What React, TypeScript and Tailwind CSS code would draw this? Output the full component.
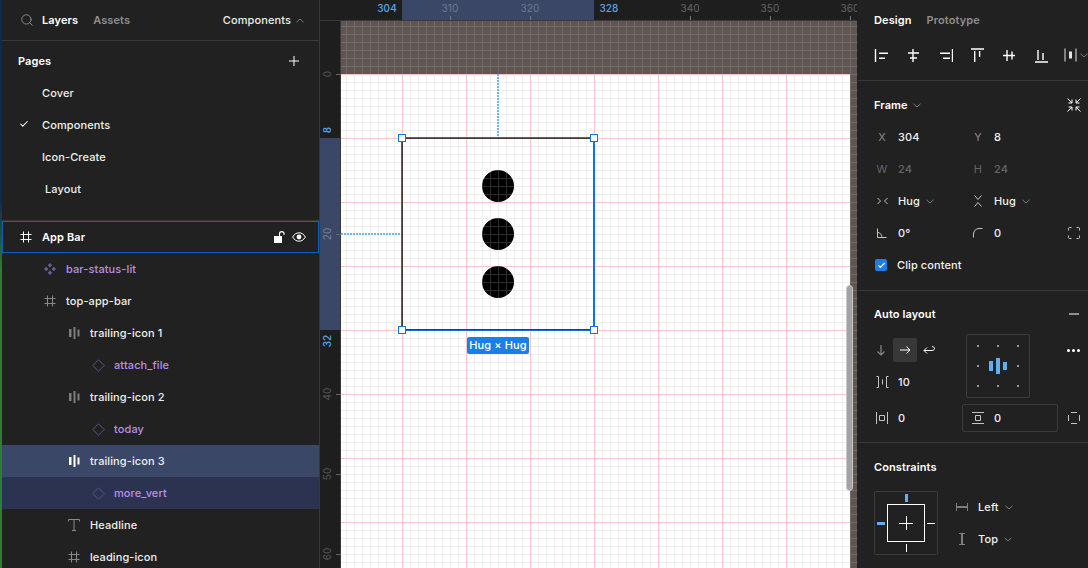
import { ReactNode } from 'react';
import { Search, Plus, Check, Minus } from 'lucide-react';

const FONT = "font-['Inter','Liberation_Sans',sans-serif]";

const Chevron = ({ up = false, className = '' }: { up?: boolean; className?: string }) => (
  <svg width="8" height="5" viewBox="0 0 8 5" fill="none" className={className}>
    <path d={up ? 'M0.5 4.2 L4 1 L7.5 4.2' : 'M0.5 0.8 L4 4 L7.5 0.8'} stroke="#7c7c7c" strokeWidth="1" />
  </svg>
);

const FrameIcon = ({ color = '#8a8a8a' }: { color?: string }) => (
  <svg width="12" height="12" viewBox="0 0 12 12" fill="none" stroke={color} strokeWidth="1">
    <path d="M3.5 0.5V11.5M8.5 0.5V11.5M0.5 3.5H11.5M0.5 8.5H11.5" />
  </svg>
);

const BarsIcon = ({ color = '#7d7d7d' }: { color?: string }) => (
  <svg width="11" height="12" viewBox="0 0 11 12" fill={color}>
    <rect x="0" y="2" width="2.5" height="8" />
    <rect x="4.5" y="0" width="2" height="12" />
    <rect x="8.5" y="2.5" width="2" height="7" />
  </svg>
);

const DiamondIcon = () => (
  <svg width="13" height="13" viewBox="0 0 13 13" fill="none" stroke="#5f4f8c" strokeWidth="1">
    <path d="M6.5 0.8 L12.2 6.5 L6.5 12.2 L0.8 6.5 Z" />
  </svg>
);

const ComponentIcon = () => (
  <svg width="12" height="12" viewBox="0 0 12 12" fill="#6f5a9e">
    <path d="M6 0 L8.2 2.2 L6 4.4 L3.8 2.2 Z" />
    <path d="M2.2 3.8 L4.4 6 L2.2 8.2 L0 6 Z" />
    <path d="M9.8 3.8 L12 6 L9.8 8.2 L7.6 6 Z" />
    <path d="M6 7.6 L8.2 9.8 L6 12 L3.8 9.8 Z" />
  </svg>
);

const TextIcon = () => (
  <svg width="12" height="12" viewBox="0 0 12 12" fill="none" stroke="#8a8a8a" strokeWidth="1">
    <path d="M0.5 2.5V0.5H11.5V2.5M6 0.5V11.5M4 11.5H8" />
  </svg>
);

const LockOpen = () => (
  <svg width="11" height="12" viewBox="0 0 11 12" fill="none">
    <rect x="0" y="5" width="8" height="7" fill="#fff" />
    <path d="M5.5 5V2.8C5.5 1.5 6.5 0.6 7.8 0.6C9.1 0.6 10 1.5 10 2.8V4" stroke="#fff" strokeWidth="1.1" />
  </svg>
);

const EyeIcon = () => (
  <svg width="14" height="10" viewBox="0 0 14 10" fill="none">
    <path d="M0.6 5C2.2 2.2 4.4 0.8 7 0.8C9.6 0.8 11.8 2.2 13.4 5C11.8 7.8 9.6 9.2 7 9.2C4.4 9.2 2.2 7.8 0.6 5Z" stroke="#fff" strokeWidth="1" />
    <circle cx="7" cy="5" r="2.4" fill="#fff" />
  </svg>
);

type Layer = { name: string; depth: number; icon: ReactNode; purple?: boolean; bg?: string };

const LAYERS: Layer[] = [
  { name: 'bar-status-lit', depth: 1, icon: <ComponentIcon />, purple: true },
  { name: 'top-app-bar', depth: 1, icon: <FrameIcon /> },
  { name: 'trailing-icon 1', depth: 2, icon: <BarsIcon /> },
  { name: 'attach_file', depth: 3, icon: <DiamondIcon />, purple: true },
  { name: 'trailing-icon 2', depth: 2, icon: <BarsIcon /> },
  { name: 'today', depth: 3, icon: <DiamondIcon />, purple: true },
  { name: 'trailing-icon 3', depth: 2, icon: <BarsIcon color="#ffffff" />, bg: 'bg-[#3a4766]' },
  { name: 'more_vert', depth: 3, icon: <DiamondIcon />, purple: true, bg: 'bg-[#2c3350]' },
  { name: 'Headline', depth: 2, icon: <TextIcon /> },
  { name: 'leading-icon', depth: 2, icon: <FrameIcon /> },
];

const PAGES = ['Cover', 'Components', 'Icon-Create', ' Layout'];

function LeftPanel() {
  return (
    <div className="flex h-full w-[320px] shrink-0 border-r border-[#383838] bg-[#212121]">
      <div className="w-[2px] shrink-0 bg-[linear-gradient(#13294a_0,#13294a_200px,#2e7d32_270px)]" />
      <div className="min-w-0 flex-1">
        <div className="flex h-[41px] items-center border-b border-[#383838] pl-[18px] pr-[15px]">
          <Search size={14} strokeWidth={1.7} className="mr-[8px] text-[#8a8a8a]" />
          <span className="mr-[15px] text-[11px] font-semibold text-white">Layers</span>
          <span className="text-[11px] font-semibold text-[#8e8e8e]">Assets</span>
          <span className="ml-auto text-[11px] font-[450] text-[#ececec]">Components</span>
          <Chevron up className="ml-[5px]" />
        </div>
        <div className="border-b border-[#383838] pt-[4px] pb-[15px]">
          <div className="flex h-8 items-center justify-between pl-[16px] pr-[17px]">
            <span className="text-[11px] font-semibold text-white">Pages</span>
            <Plus size={16} strokeWidth={1.5} className="text-white" />
          </div>
          {PAGES.map((p) => (
            <div key={p} className="relative flex h-8 items-center pl-[40px] text-[11px] font-[450] text-[#eeeeee]">
              {p === 'Components' && <Check size={10} strokeWidth={2.5} className="absolute left-[17px] top-[10px] text-white" />}
              <span className={p === ' Layout' ? 'pl-[3px]' : ''}>{p.trim()}</span>
            </div>
          ))}
        </div>
        <div className="flex h-8 items-center border border-[#0d5fc0] pl-[17px] pr-[12px]">
          <FrameIcon color="#ffffff" />
          <span className="ml-[10px] text-[11px] font-semibold text-white">App Bar</span>
          <span className="ml-auto flex items-center gap-[7px]">
            <LockOpen />
            <EyeIcon />
          </span>
        </div>
        {LAYERS.map((l) => (
          <div key={l.name} className={`flex h-8 items-center ${l.bg ?? ''}`}>
            <span className={`flex w-[16px] justify-center ${l.depth === 1 ? 'ml-[40px]' : l.depth === 2 ? 'ml-[64px]' : 'ml-[88px]'}`}>
              {l.icon}
            </span>
            <span className={`ml-[8px] text-[11px] font-[450] ${l.purple ? 'text-[#b98ff0]' : 'text-[#eeeeee]'}`}>{l.name}</span>
          </div>
        ))}
      </div>
    </div>
  );
}

const TOP_MARKS = [
  { label: '304', x: 67, blue: true },
  { label: '310', x: 130 },
  { label: '320', x: 210 },
  { label: '328', x: 289, blue: true },
  { label: '340', x: 370 },
  { label: '350', x: 450 },
  { label: '360', x: 530 },
];

const SIDE_MARKS = [
  { label: '0', y: 53 },
  { label: '8', y: 109, blue: true },
  { label: '20', y: 213 },
  { label: '32', y: 320, blue: true },
  { label: '40', y: 373 },
  { label: '50', y: 453 },
  { label: '60', y: 533 },
];

function TopRuler() {
  return (
    <div className="relative h-[21px] shrink-0 overflow-hidden border-b border-[#383838] bg-[#1e1e1e]">
      <div className="absolute left-[82px] top-0 h-full w-[192px] bg-[#3a4766]" />
      {TOP_MARKS.map((m) => (
        <div key={m.label}>
          <span
            className={`absolute top-[1px] -translate-x-1/2 text-[10px] leading-[14px] ${m.blue ? 'font-medium text-[#5aa5e6]' : m.x < 270 ? 'text-[#6f7890]' : 'text-[#666666]'}`}
            style={{ left: m.x }}
          >
            {m.label}
          </span>
          {!m.blue && <span className="absolute top-[16px] h-[4px] w-px bg-[#777777]" style={{ left: m.x }} />}
        </div>
      ))}
    </div>
  );
}

function SideRuler() {
  return (
    <div className="relative w-[21px] shrink-0 border-r border-[#383838] bg-[#1e1e1e]">
      <div className="absolute left-0 top-[117px] h-[192px] w-full bg-[#3a4766]" />
      {SIDE_MARKS.map((m) => (
        <div key={m.label}>
          <span
            className={`absolute left-[7px] -translate-x-1/2 -translate-y-1/2 -rotate-90 text-[10px] leading-[12px] ${m.blue ? 'font-medium text-[#5aa5e6]' : m.label === '20' ? 'text-[#7a8296]' : 'text-[#555555]'}`}
            style={{ top: m.y }}
          >
            {m.label}
          </span>
          {!m.blue && <span className="absolute left-[16px] h-px w-[5px] bg-[#666666]" style={{ top: m.y }} />}
        </div>
      ))}
    </div>
  );
}

const Handle = ({ pos }: { pos: string }) => (
  <div className={`absolute h-[8px] w-[8px] border border-[#1273de] bg-white ${pos}`} />
);

const Dot = () => (
  <div className="h-8 w-8 rounded-full bg-black bg-[linear-gradient(90deg,#2c2c2c_1px,transparent_1px),linear-gradient(#2c2c2c_1px,transparent_1px)] bg-[size:8px_8px]" />
);

function Canvas() {
  return (
    <div className="relative min-w-0 flex-1 overflow-hidden bg-[#5f5553] bg-[linear-gradient(90deg,#75696a_1px,transparent_1px),linear-gradient(#75696a_1px,transparent_1px)] bg-[size:8px_8px] bg-[position:5px_5px] pt-[53px]">
      <div className="h-full w-[509px] bg-white bg-[linear-gradient(90deg,#f0c8c8_1px,transparent_1px),linear-gradient(#f0c8c8_1px,transparent_1px),linear-gradient(90deg,#eeeeee_1px,transparent_1px),linear-gradient(#eeeeee_1px,transparent_1px)] bg-[size:64px_64px,64px_64px,8px_8px,8px_8px] bg-[position:61px_0,61px_0,5px_0,5px_0]" />

      <div className="absolute left-[156px] top-[53px] h-[62px] w-[2px] bg-[repeating-linear-gradient(#6fb6f6_0,#6fb6f6_2px,transparent_2px,transparent_3px)]" />
      <div className="absolute left-0 top-[212px] h-[2px] w-[59px] bg-[repeating-linear-gradient(90deg,#6fb6f6_0,#6fb6f6_2px,transparent_2px,transparent_3px)]" />

      <div className="absolute left-[60px] top-[116px] h-[194px] w-[194px] border border-[#1273de]">
        <div className="flex h-full w-full flex-col items-center justify-center gap-4 border border-[#43373a] border-r-[#1273de]">
          <Dot />
          <Dot />
          <Dot />
        </div>
        <Handle pos="-left-[4px] -top-[4px]" />
        <Handle pos="-right-[4px] -top-[4px]" />
        <Handle pos="-bottom-[4px] -left-[4px]" />
        <Handle pos="-bottom-[4px] -right-[4px]" />
        <div className="absolute left-[65px] top-[199px] flex h-[17px] w-[62px] items-center justify-center rounded-[2px] bg-[#1a7fe8] text-[11px] font-[450] whitespace-nowrap text-white">
          Hug × Hug
        </div>
      </div>

      <div className="absolute left-[505px] top-[264px] h-[206px] w-[7px] rounded-full border border-[#c8c8c8] bg-[#a3a3a3]" />
    </div>
  );
}

const ALIGN_ICONS = [
  'M2.5 2V15M6 6.2H15M6 11.2H12',
  'M8 2V15M3 6H14M5 11H12',
  'M15.5 2V15M3 6.2H13M6 11.2H13',
  'M2 2H15M5.7 4V15M10.6 4V10',
  'M2 8.5H14M6 3V14M11 4.5V12.5',
  'M2 15H15M5 3V13M10 6V13',
];

function Field({ label, value, dim = false }: { label: ReactNode; value: ReactNode; dim?: boolean }) {
  return (
    <div className="flex h-8 w-[96px] items-center">
      <span className={`flex w-[20px] justify-center text-[11px] ${dim ? 'text-[#666666]' : 'text-[#8a8a8a]'}`}>{label}</span>
      <span className={`ml-[6px] flex items-center text-[11px] font-[450] ${dim ? 'text-[#666666]' : 'text-[#f0f0f0]'}`}>{value}</span>
    </div>
  );
}

const Stroke = ({ w, h, d }: { w: number; h: number; d: string }) => (
  <svg width={w} height={h} viewBox={`0 0 ${w} ${h}`} fill="none" stroke="#c4c4c4" strokeWidth="1">
    <path d={d} />
  </svg>
);

function RightPanel() {
  return (
    <div className="h-full w-[231px] shrink-0 bg-[#212121] pl-px">
      <div className="flex h-[40px] items-center gap-[15px] pl-[16px]">
        <span className="text-[11px] font-semibold text-white">Design</span>
        <span className="text-[11px] font-semibold text-[#8e8e8e]">Prototype</span>
      </div>
      <div className="flex h-[41px] items-start border-b border-[#383838] pl-[15px]">
        <div className="flex h-[30px] items-center gap-[16px]">
          {ALIGN_ICONS.map((d) => (
            <svg key={d} width="16" height="16" viewBox="0 0 16 16" fill="none" stroke="#fff" strokeWidth="1.4">
              <path d={d} />
            </svg>
          ))}
          <span className="-ml-[1px] flex items-center gap-[3px]">
            <svg width="13" height="14" viewBox="0 0 13 14" fill="none" stroke="#e4e4e4" strokeWidth="1">
              <path d="M1 0.5V13.5M12 0.5V13.5" />
              <path d="M6.5 3.5V10.5" strokeWidth="3" />
            </svg>
            <Chevron />
          </span>
        </div>
      </div>

      <div className="h-[210px] border-b border-[#383838] pt-[8px]">
        <div className="flex h-8 items-center pl-[16px] pr-[7px]">
          <span className="text-[11px] font-semibold text-white">Frame</span>
          <Chevron className="ml-[5px]" />
          <svg width="14" height="14" viewBox="0 0 14 14" fill="none" stroke="#fff" strokeWidth="1" className="ml-auto">
            <path d="M0.5 0.5L5 5M5 1.5V5H1.5M13.5 0.5L9 5M9 1.5V5H12.5M0.5 13.5L5 9M5 12.5V9H1.5M13.5 13.5L9 9M9 12.5V9H12.5" />
          </svg>
        </div>
        <div className="grid grid-cols-[96px_96px_1fr] pl-[14px] pr-[8px]">
          <Field label="X" value="304" />
          <Field label="Y" value="8" />
          <span />
          <Field label="W" value="24" dim />
          <Field label="H" value="24" dim />
          <span />
          <Field
            label={<Stroke w={11} h={8} d="M0.5 1L3.5 4L0.5 7M10.5 1L7.5 4L10.5 7" />}
            value={<>Hug<Chevron className="ml-[6px]" /></>}
          />
          <Field
            label={<Stroke w={10} h={12} d="M1.5 0.5L5 4.5L8.5 0.5M1.5 11.5L5 7.5L8.5 11.5" />}
            value={<>Hug<Chevron className="ml-[6px]" /></>}
          />
          <span />
          <Field label={<Stroke w={10} h={10} d="M0.5 0.5V9.5H9.5M0.5 4.5C3 4.5 5 6.5 5 9.5" />} value="0°" />
          <Field label={<Stroke w={10} h={10} d="M0.5 9.5V6C0.5 3 3 0.5 6 0.5H9.5" />} value="0" />
          <div className="flex items-center justify-end">
            <Stroke w={12} h={12} d="M0.5 3.5V1.5C0.5 0.9 0.9 0.5 1.5 0.5H3.5M8.5 0.5H10.5C11.1 0.5 11.5 0.9 11.5 1.5V3.5M11.5 8.5V10.5C11.5 11.1 11.1 11.5 10.5 11.5H8.5M3.5 11.5H1.5C0.9 11.5 0.5 11.1 0.5 10.5V8.5" />
          </div>
        </div>
        <div className="flex h-8 items-center pl-[17px]">
          <span className="flex h-3 w-3 items-center justify-center rounded-[2px] bg-[#1a7fe8]">
            <Check size={9} strokeWidth={3} className="text-white" />
          </span>
          <span className="ml-[10px] text-[11px] font-[450] text-[#f0f0f0]">Clip content</span>
        </div>
      </div>

      <div className="h-[152px] border-b border-[#383838] pt-[7px]">
        <div className="flex h-8 items-center pl-[16px] pr-[6px]">
          <span className="text-[11px] font-semibold text-white">Auto layout</span>
          <Minus size={16} strokeWidth={1.5} className="ml-auto text-white" />
        </div>
        <div className="mt-[4px] flex h-[64px]">
          <div className="w-[108px]">
            <div className="flex h-8 items-center pl-[17px]">
              <svg width="12" height="12" viewBox="0 0 12 12" fill="none" stroke="#8a8a8a" strokeWidth="1.2">
                <path d="M6 1V11M2.5 7.5L6 11L9.5 7.5" />
              </svg>
              <span className="ml-[6px] flex h-6 w-6 items-center justify-center rounded-[2px] bg-[#383838]">
                <svg width="12" height="10" viewBox="0 0 12 10" fill="none" stroke="#fff" strokeWidth="1">
                  <path d="M1 5H11M7.5 1.5L11 5L7.5 8.5" />
                </svg>
              </span>
              <svg width="12" height="10" viewBox="0 0 12 10" fill="none" stroke="#fff" strokeWidth="1" className="ml-[6px]">
                <path d="M4 1.5L1 4.5L4 7.5M1 4.5H9C10.4 4.5 11.5 3.6 11.5 2.5C11.5 1.4 10.4 0.5 9 0.5" transform="translate(0 1)" />
              </svg>
            </div>
            <div className="flex h-8 items-center pl-[18px]">
              <Stroke w={13} h={12} d="M0.5 0.5H2.5V11.5H0.5M12.5 0.5H10.5V11.5H12.5M6.5 3.5V8.5" />
              <span className="ml-[9px] text-[11px] font-[450] text-[#f0f0f0]">10</span>
            </div>
          </div>
          <div className="flex h-[64px] w-[64px] items-center justify-center rounded-[2px] border border-[#3c3c3c]">
            <svg width="50" height="50" viewBox="0 0 50 50" fill="#9a9a9a">
              <rect x="4" y="4" width="2" height="2" />
              <rect x="24" y="4" width="2" height="2" />
              <rect x="44" y="4" width="2" height="2" />
              <rect x="4" y="24" width="2" height="2" />
              <rect x="44" y="24" width="2" height="2" />
              <rect x="4" y="44" width="2" height="2" />
              <rect x="24" y="44" width="2" height="2" />
              <rect x="44" y="44" width="2" height="2" />
              <rect x="16" y="20" width="4" height="10" fill="#63aef0" />
              <rect x="23" y="17" width="4" height="16" fill="#63aef0" />
              <rect x="30" y="21" width="4" height="8" fill="#63aef0" />
            </svg>
          </div>
          <div className="flex h-8 flex-1 items-center justify-end gap-[2px] pr-[8px]">
            <span className="h-[3px] w-[3px] rounded-full bg-white" />
            <span className="h-[3px] w-[3px] rounded-full bg-white" />
            <span className="h-[3px] w-[3px] rounded-full bg-white" />
          </div>
        </div>
        <div className="mt-[6px] flex h-[28px] items-center">
          <div className="flex w-[104px] items-center pl-[18px]">
            <Stroke w={12} h={12} d="M0.5 0V12M11.5 0V12M3.5 3.5H8.5V8.5H3.5Z" />
            <span className="ml-[10px] text-[11px] font-[450] text-[#f0f0f0]">0</span>
          </div>
          <div className="flex h-[28px] w-[96px] items-center rounded-[2px] border border-[#3c3c3c] pl-[9px]">
            <Stroke w={12} h={12} d="M0 0.5H12M0 11.5H12M3.5 3.5H8.5V8.5H3.5Z" />
            <span className="ml-[10px] text-[11px] font-[450] text-[#f0f0f0]">0</span>
          </div>
          <div className="flex flex-1 justify-end pr-[8px]">
            <Stroke w={12} h={12} d="M0.5 3V9M11.5 3V9M3 0.5H9M3 11.5H9" />
          </div>
        </div>
      </div>

      <div className="pt-[8px]">
        <div className="flex h-8 items-center pl-[16px]">
          <span className="text-[11px] font-semibold text-white">Constraints</span>
        </div>
        <div className="mt-[8px] flex pl-[16px]">
          <svg width="64" height="64" viewBox="0 0 64 64" fill="none">
            <rect x="0.5" y="0.5" width="63" height="63" rx="1" stroke="#3c3c3c" />
            <rect x="13.5" y="13.5" width="37" height="37" stroke="#fff" />
            <path d="M32.5 25V39M25 32.5H39M32.5 53V61M53 32.5H61" stroke="#fff" />
            <rect x="31" y="3" width="3" height="8" fill="#63aef0" />
            <rect x="3" y="31" width="8" height="3" fill="#63aef0" />
          </svg>
          <div className="ml-[18px]">
            <div className="flex h-8 items-center">
              <svg width="12" height="8" viewBox="0 0 12 8" fill="none" stroke="#7d7d7d">
                <path d="M0.5 0V8M11.5 0V8" />
                <path d="M1 4H11" strokeWidth="2" />
              </svg>
              <span className="ml-[10px] text-[11px] font-[450] text-[#f0f0f0]">Left</span>
              <Chevron className="ml-[6px]" />
            </div>
            <div className="flex h-8 items-center">
              <svg width="12" height="12" viewBox="0 0 12 12" fill="none" stroke="#7d7d7d">
                <path d="M3 0.5H9M3 11.5H9" />
                <path d="M6 1V11" strokeWidth="2" />
              </svg>
              <span className="ml-[10px] text-[11px] font-[450] text-[#f0f0f0]">Top</span>
              <Chevron className="ml-[6px]" />
            </div>
          </div>
        </div>
      </div>
    </div>
  );
}

export default function App() {
  return (
    <div className={`flex h-[568px] w-[1088px] overflow-hidden bg-[#212121] tracking-[0.1px] ${FONT}`}>
      <LeftPanel />
      <div className="flex min-w-0 flex-1 flex-col">
        <TopRuler />
        <div className="flex min-h-0 flex-1">
          <SideRuler />
          <Canvas />
        </div>
      </div>
      <RightPanel />
    </div>
  );
}
